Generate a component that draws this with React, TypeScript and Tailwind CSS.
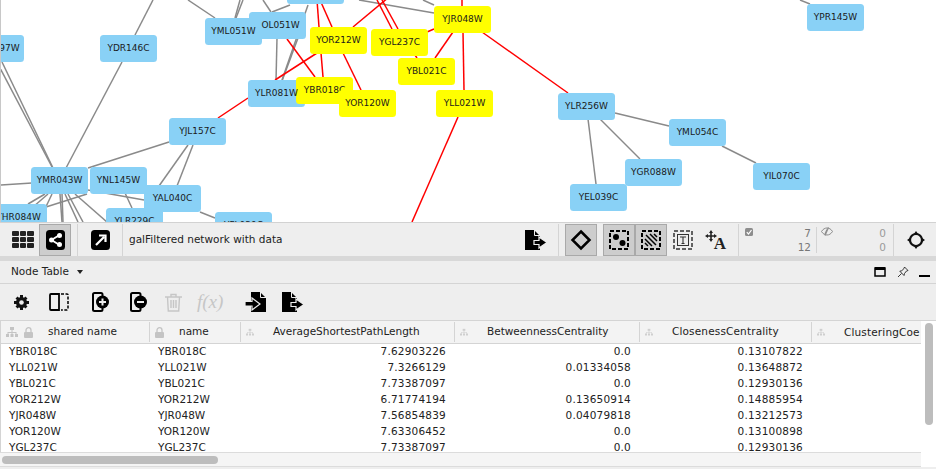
import type { ReactNode } from "react";

type GraphNode = { label: string; pos: string; hit?: boolean; text?: string };

// z-order follows array order, later nodes sit on top
const nodes: GraphNode[] = [
  { label: "97W", pos: "left-[-33px] top-[35px]", text: "pl-[28px]" },
  { label: "YDR146C", pos: "left-[100px] top-[35px]" },
  { label: "YML051W", pos: "left-[205px] top-[18px]", text: "[&>span]:relative [&>span]:z-10" },
  { label: "OL051W", pos: "left-[249px] top-[12px]", text: "pl-[6px]" },
  { label: "", pos: "left-[287px] top-[-23px]" },
  { label: "YLR081W", pos: "left-[248px] top-[80px]", text: "[&>span]:relative [&>span]:z-10" },
  { label: "YJL157C", pos: "left-[169px] top-[118px]" },
  { label: "YHR084W", pos: "left-[-10px] top-[204px]" },
  { label: "YMR043W", pos: "left-[31px] top-[167px]" },
  { label: "YLR229C", pos: "left-[106px] top-[208px]" },
  { label: "YNL145W", pos: "left-[90px] top-[167px]" },
  { label: "YAL040C", pos: "left-[144px] top-[185px]" },
  { label: "YFL039C", pos: "left-[215px] top-[212px]" },
  { label: "YBR018C", pos: "left-[296px] top-[77px]", hit: true },
  { label: "YOR120W", pos: "left-[339px] top-[90px]", hit: true },
  { label: "YOR212W", pos: "left-[310px] top-[27px]", hit: true },
  { label: "YGL237C", pos: "left-[371px] top-[29px]", hit: true },
  { label: "YBL021C", pos: "left-[398px] top-[58px]", hit: true },
  { label: "YJR048W", pos: "left-[434px] top-[6px]", hit: true },
  { label: "YLL021W", pos: "left-[436px] top-[90px]", hit: true },
  { label: "YLR256W", pos: "left-[558px] top-[93px]" },
  { label: "YML054C", pos: "left-[669px] top-[119px]" },
  { label: "YGR088W", pos: "left-[625px] top-[159px]" },
  { label: "YIL070C", pos: "left-[753px] top-[163px]" },
  { label: "YEL039C", pos: "left-[570px] top-[184px]" },
  { label: "YPR145W", pos: "left-[807px] top-[4px]" },
];

const grayEdges = [
  [153, 0, 135, 35], [122, 62, 66, 168], [2, 62, 53, 168], [0, 68, 52, 167],
  [0, 185, 32, 183], [169, 142, 88, 168], [188, 145, 159, 186], [193, 145, 177, 186],
  [125, 193, 132, 208], [45, 194, 28, 204], [48, 194, 33, 207], [52, 194, 43, 213],
  [60, 194, 62, 222], [62, 194, 63, 222], [65, 194, 78, 222], [68, 194, 83, 222],
  [75, 194, 107, 222], [87, 194, 46, 207], [88, 190, 144, 200], [200, 212, 215, 218],
  [188, 0, 215, 18], [243, 0, 236, 18], [240, 0, 235, 18], [263, 0, 271, 12],
  [290, 5, 272, 12], [277, 38, 276, 81], [298, 38, 282, 81], [308, 5, 282, 80],
  [359, 0, 434, 13], [423, 0, 434, 5], [588, 119, 596, 184], [600, 119, 640, 159],
  [615, 113, 669, 126], [722, 146, 756, 163], [800, 0, 810, 4],
];

const redEdges = [
  [395, -8, 353, 27], [317, 0, 319, 27], [320, 0, 332, 27], [377, 0, 392, 29],
  [382, 0, 398, 29], [462, 0, 462, 6], [427, 32, 434, 29], [463, 32, 464, 90],
  [453, 32, 435, 58], [482, 32, 568, 93], [415, 55, 417, 58], [321, 53, 323, 77],
  [317, 53, 275, 80], [287, 39, 315, 77], [343, 53, 361, 90], [248, 98, 218, 118],
  [458, 117, 412, 222],
];

const rows = [
  ["YBR018C", "YBR018C", "7.62903226", "0.0", "0.13107822"],
  ["YLL021W", "YLL021W", "7.3266129", "0.01334058", "0.13648872"],
  ["YBL021C", "YBL021C", "7.73387097", "0.0", "0.12930136"],
  ["YOR212W", "YOR212W", "6.71774194", "0.13650914", "0.14885954"],
  ["YJR048W", "YJR048W", "7.56854839", "0.04079818", "0.13212573"],
  ["YOR120W", "YOR120W", "7.63306452", "0.0", "0.13100898"],
  ["YGL237C", "YGL237C", "7.73387097", "0.0", "0.12930136"],
];

function Svg({ w, h, className, children }: { w: number; h: number; className?: string; children: ReactNode }) {
  return (
    <svg width={w} height={h} viewBox={`0 0 ${w} ${h}`} className={`shrink-0 ${className ?? ""}`}>
      {children}
    </svg>
  );
}

function TreeIcon({ small }: { small?: boolean }) {
  return (
    <Svg w={12} h={11} className={small ? "mt-[1px] h-[9px] w-[8px] text-[#cfcfcf]" : "text-[#c4c4c4]"}>
      <g fill="currentColor">
        <rect x="4" y="0" width="4" height="3" />
        <rect x="0" y="7" width="3" height="3" />
        <rect x="4.5" y="7" width="3" height="3" />
        <rect x="9" y="7" width="3" height="3" />
        <path d="M5.5 3h1v2h4v2h-1V6h-3v1h-1V6h-3v1h-1V5h4z" />
      </g>
    </Svg>
  );
}

function LockIcon() {
  return (
    <Svg w={9} h={11} className="text-[#c4c4c4]">
      <rect x="0" y="5" width="9" height="6" rx="1" fill="currentColor" />
      <path d="M2 5.5V3.2a2.5 2.5 0 0 1 5 0v2.3" fill="none" stroke="currentColor" strokeWidth="1.3" />
    </Svg>
  );
}

function DocExport() {
  return (
    <Svg w={23} h={20}>
      <path d="M0 0h9l6 6v14H0z" fill="#000" />
      <path d="M9.5 0v5.5H15" fill="none" stroke="#eee" strokeWidth="1" />
      <path d="M9 10.5h5V7l8 5.5-8 5.5v-3.500H9z" fill="#000" stroke="#eee" strokeWidth="1.200" />
    </Svg>
  );
}

function DocImport() {
  return (
    <Svg w={21} h={20}>
      <path d="M6 0h9l6 6v14H6z" fill="#000" />
      <path d="M15.500 0v5.500H21" fill="none" stroke="#eee" strokeWidth="1" />
      <path d="M0 9.500h7V6l8 6-8 6v-4H0z" fill="#000" stroke="#eee" strokeWidth="1.200" />
    </Svg>
  );
}

function DocBadge({ plus }: { plus?: boolean }) {
  return (
    <Svg w={17} h={20}>
      <rect x="1" y="1" width="9.500" height="18" rx="1.500" fill="none" stroke="#000" strokeWidth="2" />
      <circle cx="10.500" cy="10" r="6.500" fill="#000" />
      <rect x="7" y="9" width="7" height="2" fill="#eee" />
      {plus && <rect x="9.500" y="6.500" width="2" height="7" fill="#eee" />}
    </Svg>
  );
}

function DashedFrame({ color = "#000", width = 2, children }: { color?: string; width?: number; children: ReactNode }) {
  return (
    <Svg w={20} h={20}>
      <rect x="1" y="1" width="18" height="18" fill="none" stroke={color} strokeWidth={width} strokeDasharray="4 2" />
      {children}
    </Svg>
  );
}

function ToolbarButton({ active, children }: { active?: boolean; children: ReactNode }) {
  return (
    <div
      className={`flex h-[32px] w-[32px] items-center justify-center ${
        active ? "border border-[#a9a9a9] bg-[#cdcdcd]" : ""
      }`}
    >
      {children}
    </div>
  );
}

function Separator({ className }: { className: string }) {
  return <div className={`h-[32px] w-px shrink-0 bg-[#d4d4d4] ${className}`} />;
}

function NetworkCanvas() {
  return (
    <div className="relative h-[222px] shrink-0 overflow-hidden border-l border-[#c8c8c8] bg-white">
      <svg width={936} height={222} className="absolute left-[-1px] top-0">
        <g stroke="#8a8a8a" strokeWidth="1.500">
          {grayEdges.map(([x1, y1, x2, y2], i) => (
            <line key={i} x1={x1} y1={y1} x2={x2} y2={y2} />
          ))}
        </g>
        <g stroke="#ff0000" strokeWidth="1.500">
          {redEdges.map(([x1, y1, x2, y2], i) => (
            <line key={i} x1={x1} y1={y1} x2={x2} y2={y2} />
          ))}
        </g>
      </svg>
      {nodes.map((node) => (
        <div
          key={node.label + node.pos}
          className={`absolute ml-[-1px] flex h-[27px] w-[57px] items-center justify-center rounded-[3.5px] text-[9px] text-[#1a1a1a] ${node.pos} ${
            node.hit ? "bg-[#ffff00]" : "bg-[#89d1f6]"
          } ${node.text ?? ""}`}
        >
          <span>{node.label}</span>
        </div>
      ))}
    </div>
  );
}

function NetworkToolbar() {
  return (
    <div className="flex h-[34px] shrink-0 items-center border-t border-[#d2d2d2] bg-[#eeeeee] text-[#222]">
      <div className="ml-[12px] grid w-[22px] grid-cols-3 gap-px">
        {Array.from({ length: 9 }).map((_, i) => (
          <div key={i} className="h-[5px] rounded-[1px] bg-[#222]" />
        ))}
      </div>
      <div className="ml-[5px]">
        <ToolbarButton active>
          <Svg w={19} h={20}>
            <rect width="19" height="20" rx="3.500" fill="#000" />
            <path d="M13.500 5 5.500 10l8 5" fill="none" stroke="#fff" strokeWidth="1.800" />
            <circle cx="13.500" cy="5.500" r="2.500" fill="#fff" />
            <circle cx="5.500" cy="10" r="2.500" fill="#fff" />
            <circle cx="13.500" cy="14.500" r="2.500" fill="#fff" />
          </Svg>
        </ToolbarButton>
      </div>
      <Separator className="ml-[6px]" />
      <Svg w={19} h={20} className="ml-[13px]">
        <rect width="19" height="20" rx="3.500" fill="#000" />
        <path d="M5 15 13 7M8 5.500h6.500V12" fill="none" stroke="#fff" strokeWidth="2.200" />
      </Svg>
      <Separator className="ml-[12px]" />
      <span className="ml-[6px] w-[396px] text-[10.500px]">galFiltered network with data</span>
      <DocExport />
      <Separator className="ml-[10px]" />
      <div className="ml-[6px]">
        <ToolbarButton active>
          <Svg w={22} h={22}>
            <path d="M11 2.500 19.500 11 11 19.500 2.500 11z" fill="none" stroke="#000" strokeWidth="2.500" />
          </Svg>
        </ToolbarButton>
      </div>
      <div className="ml-[6px] flex">
        <ToolbarButton active>
          <DashedFrame>
            <circle cx="7" cy="7" r="3" fill="#000" />
            <circle cx="13.500" cy="13" r="3" fill="#000" />
          </DashedFrame>
        </ToolbarButton>
        <ToolbarButton active>
          <DashedFrame>
            <path d="M4 13l3 3M4 9l7 7M5 5l10 10M9 4l7 7M13 4l3 3" stroke="#000" strokeWidth="1.500" fill="none" />
          </DashedFrame>
        </ToolbarButton>
      </div>
      <div className="ml-[6px]">
        <DashedFrame color="#333" width={1.500}>
          <rect x="4.500" y="4.500" width="11" height="11" fill="none" stroke="#333" strokeWidth="1" />
          <path d="M7 7h6M10 7v6.500M8.500 13.500h3" stroke="#333" strokeWidth="1.100" fill="none" />
        </DashedFrame>
      </div>
      <div className="relative ml-[12px] h-[20px] w-[21px]">
        <Svg w={12} h={12} className="absolute left-0 top-0">
          <path d="M6 0 8 3H6.800v2.200H9V4l3 2-3 2V6.800H6.800V9H8l-2 3-2-3h1.200V6.800H3V8L0 6l3-2v1.200h2.200V3H4z" fill="#222" />
        </Svg>
        <span className="absolute bottom-[-1px] right-0 text-[17px] leading-[15px] font-bold [font-family:'Liberation_Serif',serif]">A</span>
      </div>
      <Separator className="ml-[12px]" />
      <div className="relative h-[32px] w-[77px] text-[10.500px] leading-[14px] text-[#777]">
        <Svg w={8} h={8} className="absolute left-[6px] top-[4px]">
          <rect width="8" height="8" rx="1.500" fill="#8d8d8d" />
          <path d="M1.800 4.200 3.500 6l3-4" fill="none" stroke="#fff" strokeWidth="1.200" />
        </Svg>
        <div className="absolute right-[5px] top-[2px] text-right">
          7
          <br />
          12
        </div>
      </div>
      <div className="h-[26px] w-px bg-[#d4d4d4]" />
      <div className="relative h-[32px] w-[76px] text-[10.500px] leading-[14px] text-[#9a9a9a]">
        <Svg w={12} h={9} className="absolute left-[4px] top-[3px]">
          <path d="M.5 4.500C2 2 4 1 6 1s4 1 5.500 3.500C10 7 8 8 6 8S2 7 .5 4.500z" fill="none" stroke="#8d8d8d" strokeWidth="1" />
          <path d="M7.500.500 4 8.500M6 2.500 4 7" stroke="#8d8d8d" strokeWidth="1.200" />
        </Svg>
        <div className="absolute right-[7px] top-[2px] text-right">
          0
          <br />
          0
        </div>
      </div>
      <Separator className="" />
      <Svg w={18} h={18} className="ml-[13px]">
        <circle cx="9" cy="9" r="6" fill="none" stroke="#111" strokeWidth="2.200" />
        <path d="M9 0l2.500 3.500h-5zM9 18l-2.500-3.500h5zM0 9l3.500-2.500v5zM18 9l-3.500 2.500v-5z" fill="#111" />
      </Svg>
    </div>
  );
}

function PanelHeader() {
  return (
    <div className="flex h-[23px] shrink-0 items-center border-b border-[#d4d4d4] bg-[#eeeeee] pl-[11px] text-[#222]">
      <span className="text-[10.500px]">Node Table</span>
      <Svg w={6} h={4} className="ml-[8px]">
        <path d="M0 0h6L3 4z" fill="#222" />
      </Svg>
      <Svg w={12} h={10} className="ml-[791px]">
        <rect x="1" y="1" width="10" height="8" fill="none" stroke="#000" strokeWidth="1.500" />
        <rect x="1" y="0" width="10" height="3" fill="#000" />
      </Svg>
      <Svg w={12} h={12} className="ml-[11px]">
        <path d="M7.500 1 11 4.500 9.500 5 7.500 7.500 7 9.500 2.800 5.200 4.800 4.700 7 2.500zM4.500 7.500 1 11" fill="none" stroke="#222" strokeWidth="0.900" />
      </Svg>
      <div className="ml-[10px] mt-[7px] h-[2px] w-[11px] bg-black" />
    </div>
  );
}

function TableToolbar() {
  return (
    <div className="flex h-[37px] shrink-0 items-center border-b border-[#d4d4d4] bg-[#eeeeee] pl-[14px]">
      <Svg w={15} h={15}>
        <g fill="#111">
          <circle cx="7.500" cy="7.500" r="5.500" />
          <path d="M6 0h3v3H6zM6 12h3v3H6zM0 6h3v3H0zM12 6h3v3h-3zM1.500 3.600l2.100-2.100 2 2-2.100 2.100zM9.400 11.500l2.100-2.100 2 2-2.100 2.100zM1.500 11.400l2-2 2.100 2.100-2 2zM9.400 3.500l2-2 2.100 2.100-2 2z" />
        </g>
        <circle cx="7.500" cy="7.500" r="2.300" fill="#eee" />
      </Svg>
      <Svg w={20} h={18} className="ml-[20px]">
        <path d="M10 1H2a1 1 0 0 0-1 1v14a1 1 0 0 0 1 1h8z" fill="none" stroke="#000" strokeWidth="1.800" />
        <path d="M12 1h6a1 1 0 0 1 1 1v14a1 1 0 0 1-1 1h-6" fill="none" stroke="#000" strokeWidth="1.500" strokeDasharray="3 1.500" />
      </Svg>
      <div className="ml-[23px]"><DocBadge plus /></div>
      <div className="ml-[21px]"><DocBadge /></div>
      <Svg w={17} h={19} className="ml-[18px]">
        <g fill="none" stroke="#c6c6c6" strokeWidth="1.400">
          <path d="M0 4h17M6 4V1.500h5V4M2.500 4l.8 14h10.400l.8-14M6 7v8M8.500 7v8M11 7v8" />
        </g>
      </Svg>
      <span className="ml-[15px] w-[29px] whitespace-nowrap text-[19px] italic text-[#c6c6c6] [font-family:'Liberation_Serif',serif]">f(x)</span>
      <div className="ml-[19px]"><DocImport /></div>
      <div className="ml-[16px]"><DocExport /></div>
    </div>
  );
}

function HeaderCell({ label, tree, lock, pad, className }: { label: string; tree?: boolean; lock?: boolean; pad: string; className: string }) {
  return (
    <div className={`relative flex h-full items-center overflow-hidden whitespace-nowrap ${className}`}>
      <div className="absolute left-[5px] top-[6px] flex gap-[6px]">
        {tree && <TreeIcon small={!lock} />}
        {lock && <LockIcon />}
      </div>
      <span className={pad}>{label}</span>
      <div className="absolute right-0 top-[1px] h-[20px] w-px bg-[#d4d4d4]" />
    </div>
  );
}

function NodeTable() {
  return (
    <div className="flex min-h-0 flex-1 bg-white">
      <div className="w-[921px] shrink-0 overflow-hidden border-l border-[#d4d4d4]">
        <div className="flex h-[23px] border-b border-[#d4d4d4] bg-[#f3f3f3] text-[10.500px] text-[#222]">
          <HeaderCell label="shared name" tree lock pad="pl-[47px]" className="w-[149px] shrink-0" />
          <HeaderCell label="name" lock pad="pl-[29px]" className="w-[91px] shrink-0" />
          <HeaderCell label="AverageShortestPathLength" tree pad="pl-[32px]" className="w-[214px] shrink-0" />
          <HeaderCell label="BetweennessCentrality" tree pad="pl-[32px]" className="w-[185px] shrink-0" />
          <HeaderCell label="ClosenessCentrality" tree pad="pl-[32px] tracking-[0.15px]" className="w-[172px] shrink-0" />
          <div className="relative flex-1 overflow-hidden whitespace-nowrap">
            <div className="absolute left-[5px] top-[6px]"><TreeIcon small /></div>
            <span className="absolute left-[32px] top-[4px] tracking-[0.15px]">ClusteringCoe</span>
          </div>
        </div>
        <div className="mt-[-1px] text-[10.500px] leading-[16px] text-[#222]">
          {rows.map((row) => (
            <div key={row[0]} className="grid h-[16px] grid-cols-[149px_91px_214px_185px_172px]">
              <span className="pl-[8px]">{row[0]}</span>
              <span className="pl-[8px]">{row[1]}</span>
              <span className="pr-[9px] text-right tracking-[0.2px]">{row[2]}</span>
              <span className="pr-[9px] text-right tracking-[0.2px]">{row[3]}</span>
              <span className="pr-[9px] text-right tracking-[0.2px]">{row[4]}</span>
            </div>
          ))}
        </div>
      </div>
      <div className="flex-1 pl-[4px] pt-[2px]">
        <div className="h-[102px] w-[8px] rounded-full bg-[#bdbdbd]" />
      </div>
    </div>
  );
}

function HorizontalScroll() {
  return (
    <div className="flex h-[15px] shrink-0 bg-white">
      <div className="flex w-[921px] items-center border-y border-[#dcdcdc] bg-[#f5f5f5] pl-[2px]">
        <div className="h-[8px] w-[216px] rounded-full bg-[#bdbdbd]" />
      </div>
    </div>
  );
}

export default function App() {
  return (
    <div className="flex h-[469px] w-[936px] flex-col overflow-hidden bg-[#eeeeee] [font-family:'DejaVu_Sans',sans-serif]">
      <NetworkCanvas />
      <NetworkToolbar />
      <div className="h-[5px] shrink-0 bg-[#d8d8d8]" />
      <PanelHeader />
      <TableToolbar />
      <NodeTable />
      <HorizontalScroll />
      <div className="h-[2px] shrink-0 bg-[#eeeeee]" />
    </div>
  );
}
